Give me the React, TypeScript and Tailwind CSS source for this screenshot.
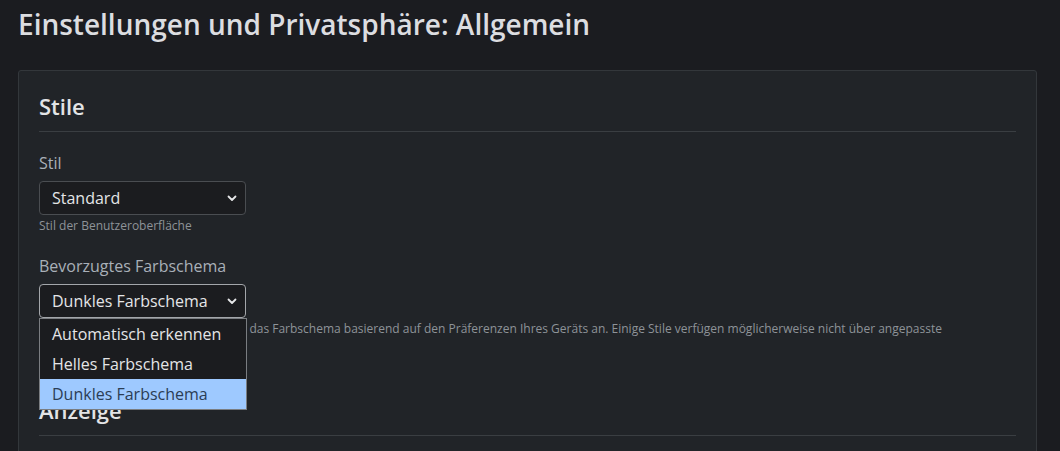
import { useState } from 'react';

const font = "font-['Open_Sans',_'Noto_Sans',_sans-serif]";

const schemes = ['Automatisch erkennen', 'Helles Farbschema', 'Dunkles Farbschema'];

function Chevron() {
  return (
    <svg
      className="pointer-events-none absolute right-[8px] top-1/2 -translate-y-1/2"
      width="10"
      height="8"
      viewBox="0 0 10 8"
      fill="none"
    >
      <path d="M1.5 2.5 L5 6 L8.5 2.5" stroke="#e6e7e9" strokeWidth="1.8" strokeLinecap="round" strokeLinejoin="round" />
    </svg>
  );
}

function FakeSelect({ value, focused }: { value: string; focused?: boolean }) {
  return (
    <div
      className={
        'relative w-[207px] h-[34px] rounded-[4px] border bg-[#1b1c1f] flex items-center pl-[12px] text-[16px] text-[#e4e5e7] ' +
        (focused ? 'border-[#a3a6aa]' : 'border-[#4a4d51]')
      }
    >
      {value}
      <Chevron />
    </div>
  );
}

export default function App() {
  const [scheme] = useState('Dunkles Farbschema');

  return (
    <div className={`min-h-screen bg-[#1b1c20] pl-[18px] pr-[23px] pt-[6px] ${font}`}>
      <h1 className="text-[28px] leading-[36px] font-semibold text-[#dcdde0] mb-[28px]">
        Einstellungen und Privatsphäre: Allgemein
      </h1>

      <div className="rounded-[3px] border border-[#33373b] bg-[#212428] px-[20px] pt-[22px] pb-[20px]">
        {/* Stile */}
        <section>
          <h2 className="text-[22px] leading-[27px] font-semibold text-[#e3e4e6] pb-[11px] border-b border-[#3a3e42]">
            Stile
          </h2>

          <div className="mt-[19px]">
            <label className="block text-[16px] leading-[24px] text-[#a9b0b8]">Stil</label>
            <div className="mt-[6px]">
              <FakeSelect value="Standard" />
            </div>
            <p className="mt-[3px] text-[12px] leading-[16px] text-[#8e9398]">Stil der Benutzeroberfläche</p>
          </div>

          <div className="mt-[20px]">
            <label className="block text-[16px] leading-[24px] text-[#a9b0b8]">Bevorzugtes Farbschema</label>
            <div className="relative mt-[6px]">
              <FakeSelect value={scheme} focused />
              <ul className="absolute left-0 top-[34px] z-10 w-[208px] border border-[#7a7d81] bg-[#1b1c1f] text-[16px] text-[#e4e5e7]">
                {schemes.map((s) => (
                  <li
                    key={s}
                    className={
                      'h-[30px] flex items-center pl-[12px] ' +
                      (s === scheme ? 'bg-[#9ec9ff] text-[#2b3d55]' : '')
                    }
                  >
                    {s}
                  </li>
                ))}
              </ul>
            </div>
            <p className="mt-[3px] pr-[70px] text-[12px] leading-[16px] text-[#8e9398]">
              Bei automatischem Modus passt sich das Farbschema basierend auf den Präferenzen Ihres Geräts an. Einige Stile verfügen möglicherweise nicht über angepasste Farbschemata.
            </p>
          </div>
        </section>

        {/* Anzeige */}
        <section className="mt-[44px]">
          <h2 className="text-[22px] leading-[27px] font-semibold text-[#e3e4e6] pb-[11px] border-b border-[#3a3e42]">
            Anzeige
          </h2>
          <div className="h-[60px]" />
        </section>
      </div>
    </div>
  );
}
